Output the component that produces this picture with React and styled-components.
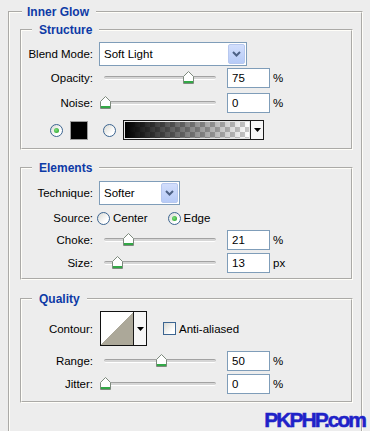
import React from "react";
import styled, { createGlobalStyle } from "styled-components";

const GlobalStyle = createGlobalStyle`
  html, body {
    margin: 0;
    padding: 0;
    height: 100%;
    overflow: hidden;
    background: #ededed;
  }
  body {
    font-family: "Liberation Sans", Arial, sans-serif;
    font-size: 11.5px;
    color: #000;
  }
`;

const Page = styled.div`
  position: relative;
  height: 431px;
  padding-top: 5px;
  box-sizing: border-box;
  overflow: hidden;
`;

const OuterBox = styled.fieldset`
  margin: 0 0 0 8px;
  width: 355px;
  padding: 4px 8px 40px 10px;
  border: 2px groove #fffef9;
  box-sizing: border-box;
  min-width: 0;
`;

const Section = styled.fieldset`
  margin: ${(p) => p.$mt || 0}px 0 0 0;
  padding: ${(p) => p.$pt}px 0 ${(p) => p.$pb}px 0;
  border: 2px groove #fffef9;
  box-sizing: border-box;
  min-width: 0;
`;

const Legend = styled.legend`
  margin-left: ${(p) => (p.$outer ? 2 : 10)}px;
  padding: ${(p) => (p.$outer ? "0 7px 0 5px" : "0 7px")};
  font-size: 12px;
  font-weight: bold;
  line-height: 14px;
  color: #0d3aa6;
`;

const Row = styled.div`
  display: flex;
  align-items: center;
  height: ${(p) => p.$h}px;
  margin-top: ${(p) => p.$mt || 0}px;
  padding-left: ${(p) => p.$pl || 0}px;
`;

const Label = styled.span`
  flex: none;
  width: 71px;
  margin-right: ${(p) => (p.$mr != null ? p.$mr : 6)}px;
  text-align: right;
  white-space: nowrap;
`;

const SelectBox = styled.div`
  display: flex;
  align-items: center;
  width: ${(p) => p.$w}px;
  height: 24px;
  border: 1px solid #7f9db9;
  background: #fff;
  box-sizing: border-box;
  padding: 1px 1px 1px 4px;
`;

const SelectText = styled.span`
  flex: 1;
`;

const SelectButton = styled.span`
  display: flex;
  align-items: center;
  justify-content: center;
  width: 17px;
  height: 100%;
  box-sizing: border-box;
  border: 1px solid #b7c8ef;
  border-radius: 2px;
  background: linear-gradient(#d2defc, #b7cbf7);
`;

const SliderWrap = styled.div`
  position: relative;
  flex: none;
  width: 122px;
  height: 20px;
  margin-right: 6px;
  padding: 0 5px;
  box-sizing: border-box;
  display: flex;
  align-items: center;
`;

const Track = styled.div`
  position: relative;
  flex: 1;
  height: 2px;
  border-top: 1px solid #a2a2a2;
  border-bottom: 1px solid #fff;
  border-radius: 2px;
  background: #d6d6d6;
`;

const Thumb = styled.svg`
  position: absolute;
  top: -6px;
  margin-left: -5px;
`;

const NumberBox = styled.input`
  width: 43px;
  height: 20px;
  box-sizing: border-box;
  border: 1px solid #7f9db9;
  padding: 0 0 0 4px;
  margin: 0;
  font: inherit;
  color: #000;
  background: #fff;
  outline: none;
`;

const Unit = styled.span`
  margin-left: 3px;
`;

const RadioDot = styled.span`
  position: relative;
  flex: none;
  width: 13px;
  height: 13px;
  border: 1px solid #3c6591;
  border-radius: 50%;
  box-sizing: border-box;
  background: linear-gradient(135deg, #d9d9d3, #fff 70%);
  &::after {
    content: "";
    display: ${(p) => (p.$checked ? "block" : "none")};
    position: absolute;
    left: 3px;
    top: 3px;
    width: 5px;
    height: 5px;
    border-radius: 50%;
    background: radial-gradient(circle at 40% 40%, #7ee07e, #1f9a1f);
  }
`;

const Option = styled.span`
  display: flex;
  align-items: center;
  gap: 3px;
  margin-right: ${(p) => p.$mr || 0}px;
`;

const Swatch = styled.span`
  width: 18px;
  height: 19px;
  margin: 0 15px 0 7px;
  box-sizing: border-box;
  border: 1px solid #9b9b9b;
  background: #000;
`;

const GradientPicker = styled.div`
  display: flex;
  width: 141px;
  height: 20px;
  margin-left: 7px;
  box-sizing: border-box;
  border: 1px solid #1a1a1a;
`;

const GradientStrip = styled.span`
  flex: 1;
  border: 1px solid #e8e8e8;
  background-image: linear-gradient(to right, #000 0%, rgba(0, 0, 0, 0) 100%),
    repeating-conic-gradient(#c9c9c9 0 25%, #fff 0 50%);
  background-size: 100% 100%, 10px 10px;
`;

const DropButton = styled.span`
  display: flex;
  align-items: center;
  justify-content: center;
  width: 12px;
  border-left: 1px solid #1a1a1a;
  background: #f6f6f6;
`;

const ContourPicker = styled.div`
  display: flex;
  width: 47px;
  height: 35px;
  box-sizing: border-box;
  border: 1px solid #111;
  margin-right: 16px;
`;

const ContourPreview = styled.span`
  flex: 1;
  background: linear-gradient(to bottom right, #fff 50%, #aca899 50%);
`;

const CheckBox = styled.span`
  width: 13px;
  height: 13px;
  margin-right: 3px;
  box-sizing: border-box;
  border: 1px solid #3c6591;
  background: linear-gradient(135deg, #d9d9d3, #fff 75%);
`;

const Watermark = styled.div`
  position: absolute;
  right: 5px;
  bottom: 1px;
  font-family: "Liberation Sans", Arial, sans-serif;
  font-size: 21px;
  font-weight: bold;
  line-height: 21px;
  letter-spacing: -2px;
  color: #1f22c8;
  -webkit-text-stroke: 0.5px #1f22c8;
`;

const Chevron = () => (
  <svg width="9" height="6" viewBox="0 0 9 6">
    <path d="M1 1 L4.5 4.5 L8 1" fill="none" stroke="#4d6185" strokeWidth="2" />
  </svg>
);

const Arrow = () => (
  <svg width="7" height="4" viewBox="0 0 7 4">
    <path d="M0 0 H7 L3.5 4 Z" fill="#000" />
  </svg>
);

const ThumbIcon = ({ pos }) => (
  <Thumb width="11" height="13" viewBox="0 0 11 13" style={{ left: pos }}>
    <path d="M5.5 0.5 L10.5 5.5 V12.5 H0.5 V5.5 Z" fill="#fff" stroke="#7d8a7d" />
    <rect x="1" y="10" width="9" height="2" fill="#33a847" />
  </Thumb>
);

const Select = ({ value, width }) => (
  <SelectBox $w={width}>
    <SelectText>{value}</SelectText>
    <SelectButton>
      <Chevron />
    </SelectButton>
  </SelectBox>
);

const SliderRow = ({ label, pct, value, unit = "%", mt }) => (
  <Row $h={20} $mt={mt}>
    <Label>{label}</Label>
    <SliderWrap>
      <Track>
        <ThumbIcon pos={1 + (pct / 100) * 111} />
      </Track>
    </SliderWrap>
    <NumberBox readOnly value={value} />
    <Unit>{unit}</Unit>
  </Row>
);

export default function App() {
  return (
    <Page>
      <GlobalStyle />
      <OuterBox>
        <Legend $outer>Inner Glow</Legend>

        <Section $pt={5} $pb={8}>
          <Legend>Structure</Legend>
          <Row $h={24}>
            <Label>Blend Mode:</Label>
            <Select value="Soft Light" width={148} />
          </Row>
          <SliderRow label="Opacity:" pct={75} value="75" mt={2} />
          <SliderRow label="Noise:" pct={0} value="0" mt={5} />
          <Row $h={20} $mt={7} $pl={28}>
            <RadioDot $checked />
            <Swatch />
            <RadioDot />
            <GradientPicker>
              <GradientStrip />
              <DropButton>
                <Arrow />
              </DropButton>
            </GradientPicker>
          </Row>
        </Section>

        <Section $mt={11} $pt={6} $pb={5}>
          <Legend>Elements</Legend>
          <Row $h={24}>
            <Label>Technique:</Label>
            <Select value="Softer" width={81} />
          </Row>
          <Row $h={16} $mt={5}>
            <Label $mr={4}>Source:</Label>
            <Option $mr={20}>
              <RadioDot />
              Center
            </Option>
            <Option>
              <RadioDot $checked />
              Edge
            </Option>
          </Row>
          <SliderRow label="Choke:" pct={21} value="21" mt={4} />
          <SliderRow label="Size:" pct={11} value="13" unit="px" mt={3} />
        </Section>

        <Section $mt={12} $pt={5} $pb={7}>
          <Legend>Quality</Legend>
          <Row $h={35}>
            <Label $mr={7}>Contour:</Label>
            <ContourPicker>
              <ContourPreview />
              <DropButton>
                <Arrow />
              </DropButton>
            </ContourPicker>
            <CheckBox />
            Anti-aliased
          </Row>
          <SliderRow label="Range:" pct={50} value="50" mt={5} />
          <SliderRow label="Jitter:" pct={0} value="0" mt={3} />
        </Section>
      </OuterBox>
      <Watermark>PKPHP.com</Watermark>
    </Page>
  );
}
